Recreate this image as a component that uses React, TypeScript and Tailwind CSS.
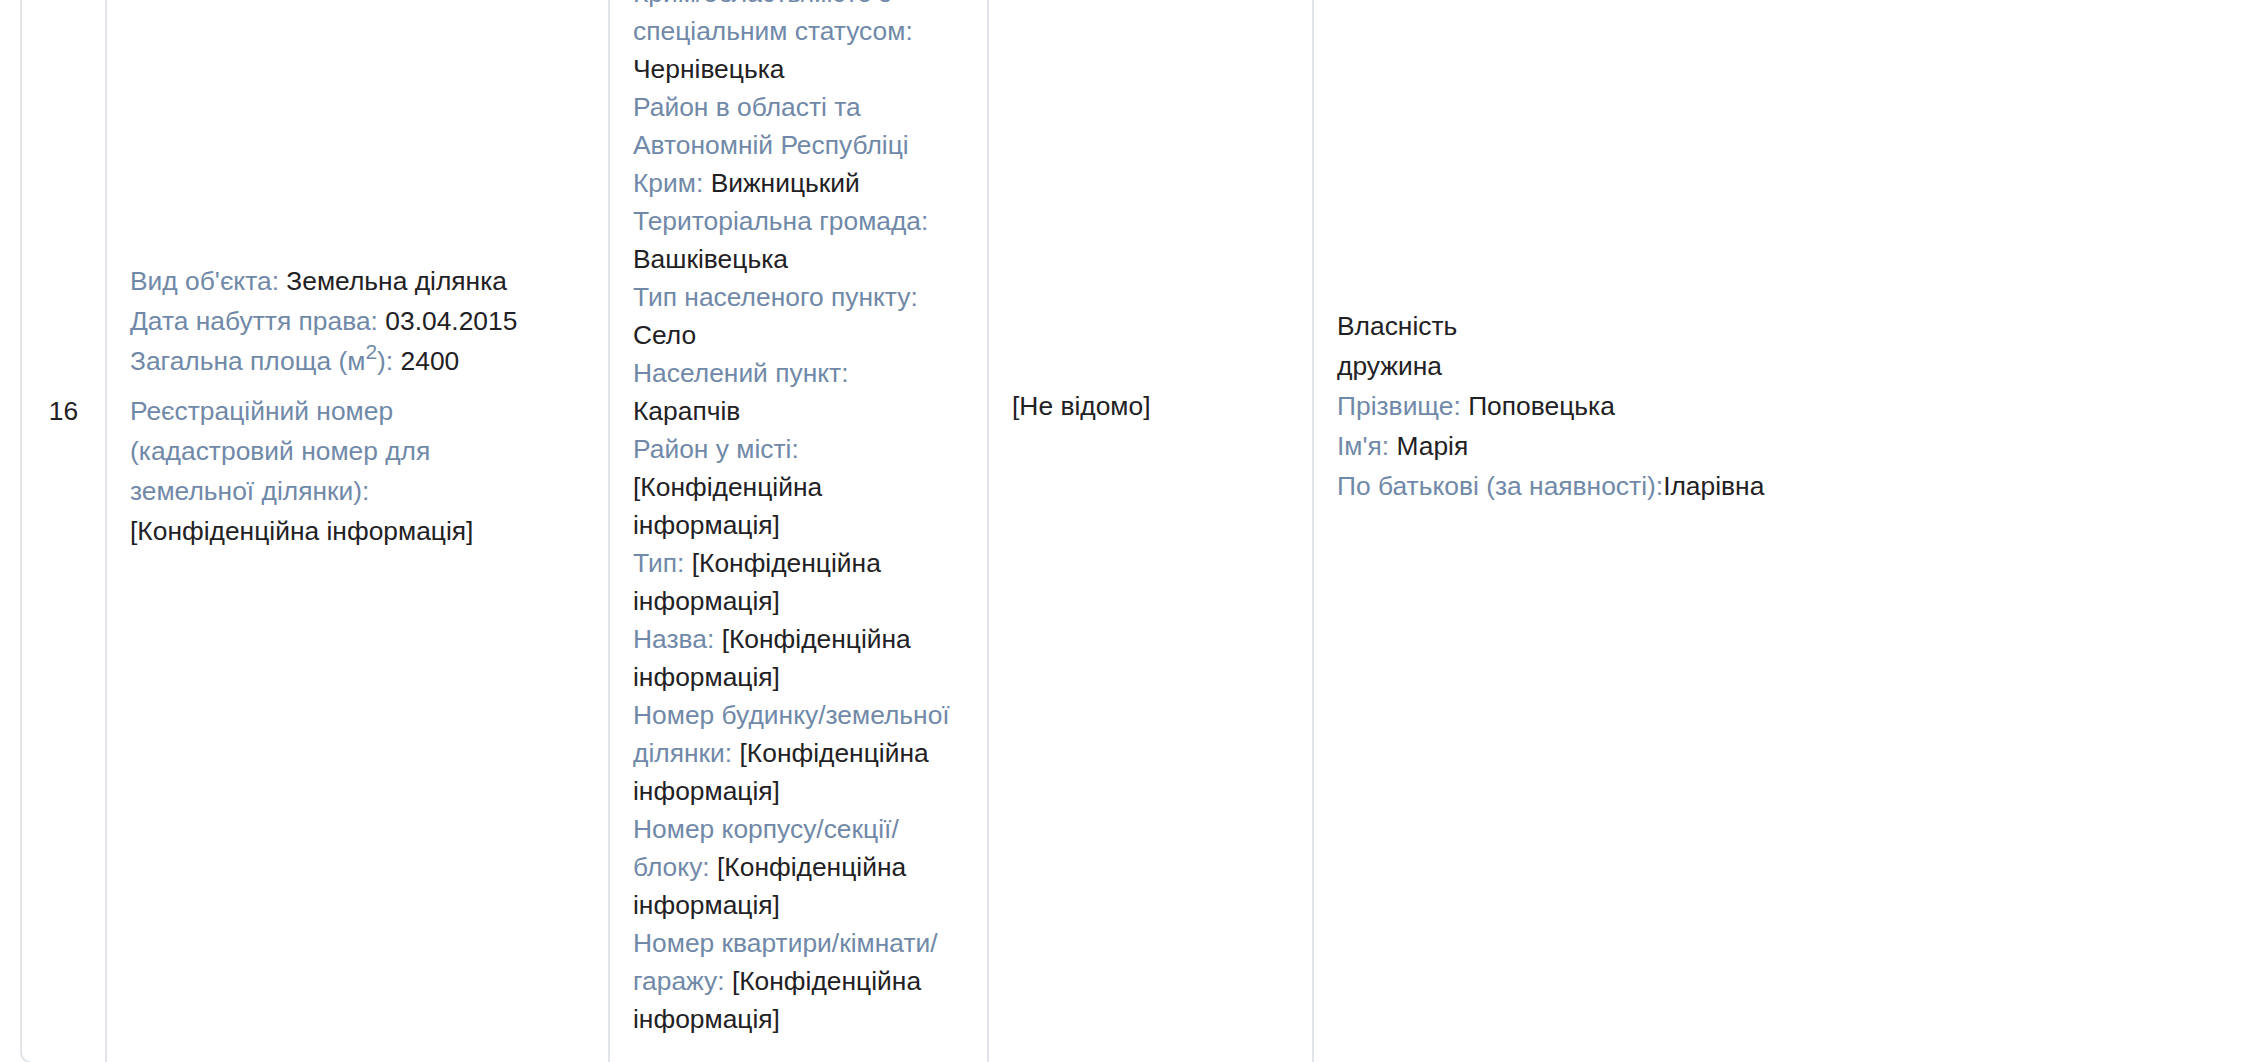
import type { ReactNode } from "react";

const CONF = "[Конфіденційна інформація]";

function Field({ label, value, tight }: { label: string; value?: ReactNode; tight?: boolean }) {
  return (
    <div>
      <span className="text-[#7189a8]">{label}</span>
      {value !== undefined && (tight ? value : <> {value}</>)}
    </div>
  );
}

const LOCATION: [string, string][] = [
  ["Країна:", "Україна"],
  ["Поштовий індекс:", CONF],
  ["Автономна Республіка Крим/область/місто з спеціальним статусом:", "Чернівецька"],
  ["Район в області та Автономній Республіці Крим:", "Вижницький"],
  ["Територіальна громада:", "Вашківецька"],
  ["Тип населеного пункту:", "Село"],
  ["Населений пункт:", "Карапчів"],
  ["Район у місті:", CONF],
  ["Тип:", CONF],
  ["Назва:", CONF],
  ["Номер будинку/земельної ділянки:", CONF],
  ["Номер корпусу/секції/блоку:", CONF],
  ["Номер квартири/кімнати/гаражу:", CONF],
];

const cell = "border-l-2 border-[#e1e5ea] align-middle py-[24px] pl-[23px]";

export default function App() {
  return (
    <div className="h-screen w-full overflow-hidden bg-white font-['Liberation_Sans',Arial,sans-serif] text-[26.4px] text-[#1f2124]">
      <div className="-mt-[242px] pl-[20px]">
        <div className="w-[2400px] overflow-hidden rounded-[12px] border-2 border-[#e1e5ea]">
          <table className="w-full table-fixed border-separate border-spacing-0">
            <colgroup>
              <col className="w-[83px]" />
              <col className="w-[503px]" />
              <col className="w-[379px]" />
              <col className="w-[325px]" />
              <col />
            </colgroup>
            <tbody>
              <tr>
                <td className="align-middle text-center leading-[40px]">16</td>
                <td className={`${cell} leading-[40px]`}>
                  <div className="mb-[10px] max-w-[410px]">
                    <Field label="Вид об'єкта:" value="Земельна ділянка" />
                    <Field label="Дата набуття права:" value="03.04.2015" />
                    <div>
                      <span className="text-[#7189a8]">
                        Загальна площа (м<sup className="-top-[11px] text-[21px]">2</sup>):
                      </span>{" "}
                      2400
                    </div>
                  </div>
                  <div className="mb-[10px] max-w-[410px]">
                    <Field label="Реєстраційний номер (кадастровий номер для земельної ділянки):" value={CONF} />
                  </div>
                </td>
                <td className={`${cell} pr-[30px] leading-[38px]`}>
                  {LOCATION.map(([label, value]) => (
                    <Field key={label} label={label} value={value} />
                  ))}
                </td>
                <td className={`${cell} leading-[40px]`}>
                  <div className="mb-[10px]">[Не відомо]</div>
                </td>
                <td className={`${cell} leading-[40px]`}>
                  <div className="mb-[10px]">
                    <div>Власність</div>
                    <div>дружина</div>
                    <Field label="Прізвище:" value="Поповецька" />
                    <Field label="Ім'я:" value="Марія" />
                    <Field label="По батькові (за наявності):" value="Іларівна" tight />
                  </div>
                </td>
              </tr>
            </tbody>
          </table>
        </div>
      </div>
    </div>
  );
}
